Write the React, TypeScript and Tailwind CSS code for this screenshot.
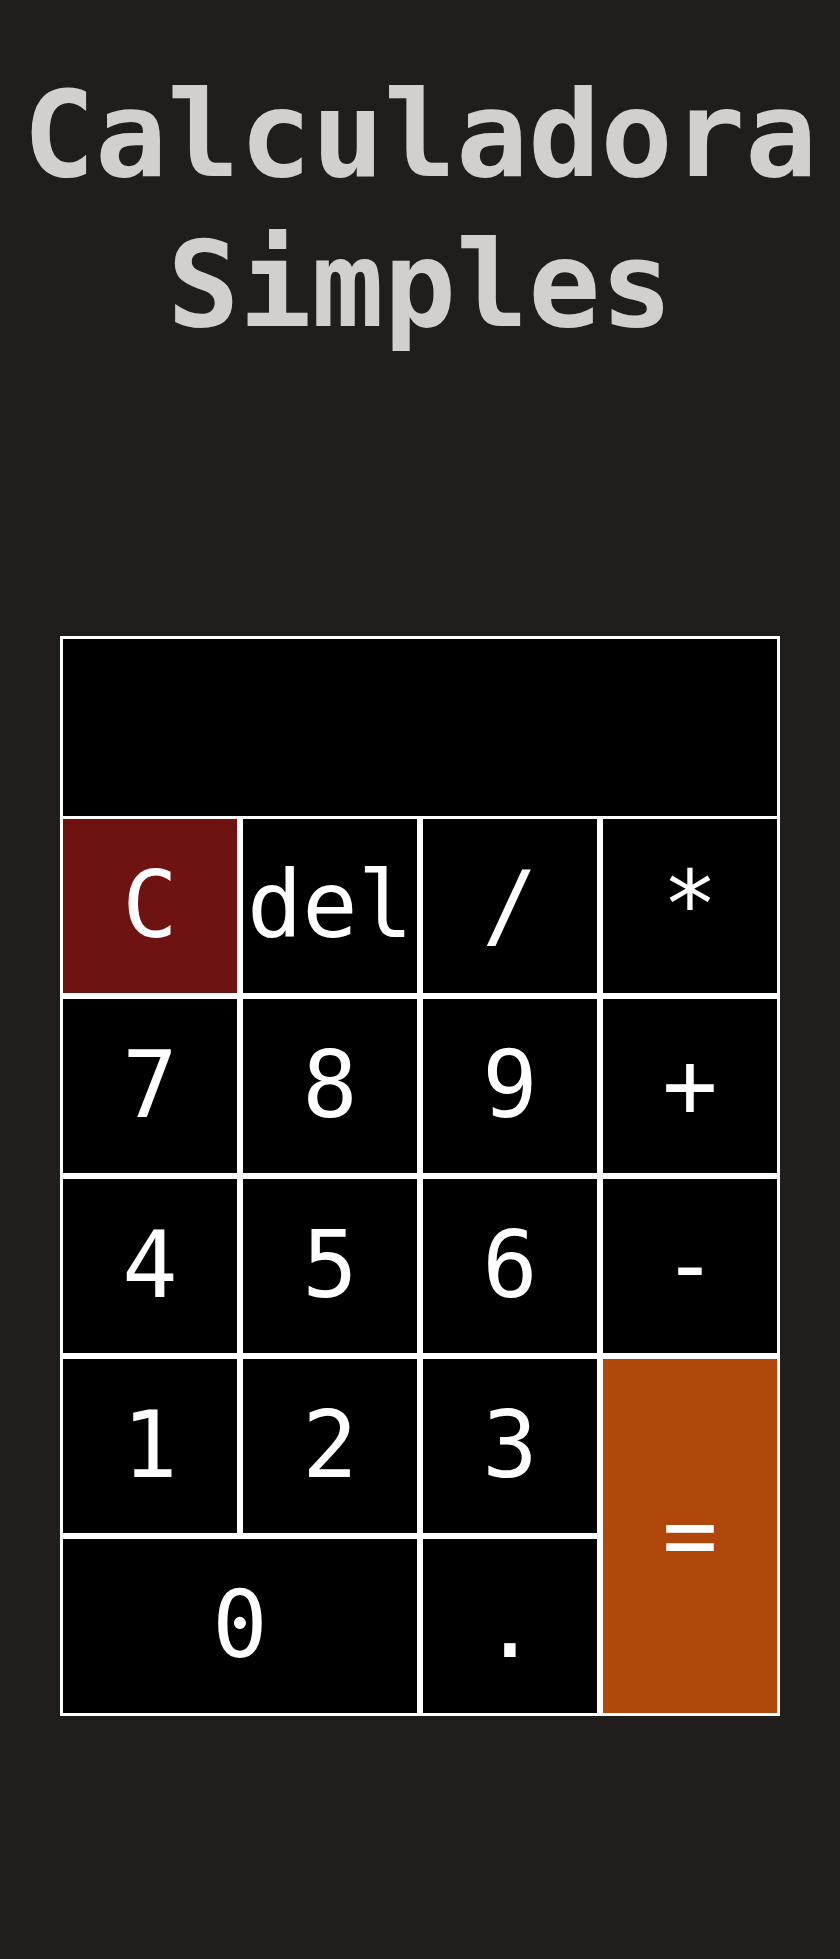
const keys: { label: string; cls?: string }[] = [
  { label: 'C', cls: 'bg-[#6e1212]' },
  { label: 'del' },
  { label: '/' },
  { label: '*' },
  { label: '7' },
  { label: '8' },
  { label: '9' },
  { label: '+' },
  { label: '4' },
  { label: '5' },
  { label: '6' },
  { label: '-' },
  { label: '1' },
  { label: '2' },
  { label: '3' },
  { label: '=', cls: 'row-span-2 bg-[#b0480c]' },
  { label: '0', cls: 'col-span-2 bg-black' },
  { label: '.' },
];

export default function App() {
  return (
    <div className="min-h-[1959px] bg-[#211d1c] pt-[60px] font-['DejaVu_Sans_Mono','Liberation_Mono',monospace]">
      <h1 className="text-center text-[120px] font-bold leading-[1.25] text-[#d3cfcf]">
        Calculadora
        <br />
        Simples
      </h1>

      <div className="mx-auto mt-[276px] w-[720px]">
        {/* display */}
        <div className="h-[180px] border-[3px] border-b-0 border-white bg-black" />

        <div className="grid grid-cols-4 auto-rows-[180px]">
          {keys.map((k) => (
            <button
              key={k.label}
              className={`flex items-center justify-center border-[3px] border-white text-[92px] leading-none text-white ${k.cls ?? 'bg-black'}`}
            >
              {k.label}
            </button>
          ))}
        </div>
      </div>
    </div>
  );
}
